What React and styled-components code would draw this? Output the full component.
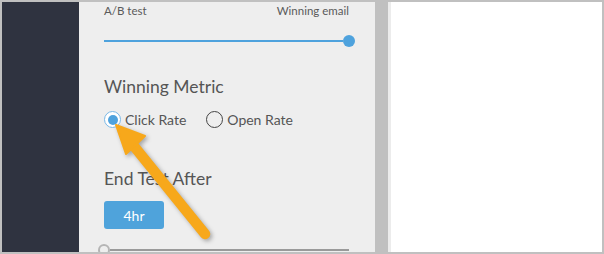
import React from "react";
import styled, { createGlobalStyle } from "styled-components";

const Global = createGlobalStyle`
  html, body { margin: 0; padding: 0; background: #fff; }
  body { font-family: Lato, "Open Sans", sans-serif; }
  * { box-sizing: border-box; }
`;

const Frame = styled.div`
  position: relative;
  width: 604px;
  height: 254px;
  border: 2px solid #c0c0c0;
  display: flex;
  overflow: hidden;
`;

const Sidebar = styled.div`
  width: 77px;
  background: #2f3340;
  flex-shrink: 0;
`;

const Panel = styled.div`
  width: 296px;
  flex-shrink: 0;
  background: #eeeeee;
  padding: 2px 20px 0 25px;
  display: flex;
  flex-direction: column;
  overflow: hidden;
  color: #555;
`;

const Gutter = styled.div`
  width: 13px;
  flex-shrink: 0;
  background: #c0c0c0;
`;

const Preview = styled.div`
  flex: 1;
  background: #fff;
  border-left: 3px solid #ececec;
`;

const LabelRow = styled.div`
  display: flex;
  justify-content: space-between;
  font-size: 11.5px;
  line-height: 14px;
  padding-right: 6px;
  color: #5a5a5a;
`;

const Slider = styled.div`
  display: flex;
  align-items: center;
  height: 12px;
  margin-top: ${(p) => p.$mt}px;
  margin-left: ${(p) => p.$ml || 0}px;
  margin-right: ${(p) => p.$mr || 0}px;
`;

const Track = styled.div`
  flex: 1;
  height: 2px;
  background: ${(p) => p.$color};
`;

const Thumb = styled.div`
  width: 12px;
  height: 12px;
  border-radius: 50%;
  flex-shrink: 0;
  background: ${(p) => (p.$outline ? "#eeeeee" : "#4ea2dd")};
  border: ${(p) => (p.$outline ? "2px solid #b5b5b5" : "none")};
`;

const Heading = styled.div`
  font-size: 17.5px;
  line-height: 20px;
  color: #555;
  margin-top: ${(p) => p.$mt}px;
`;

const RadioGroup = styled.div`
  display: flex;
  align-items: center;
  gap: 20px;
  margin-top: 14px;
  height: 18px;
`;

const RadioOption = styled.label`
  display: flex;
  align-items: center;
  gap: 4px;
  font-size: 14px;
  color: #555;
`;

const RadioCircle = styled.span`
  width: 17px;
  height: 17px;
  border-radius: 50%;
  display: flex;
  align-items: center;
  justify-content: center;
  border: 1.5px solid ${(p) => (p.$checked ? "#7ab8e6" : "#444")};
  background: ${(p) => (p.$checked ? "#fff" : "transparent")};
  &::after {
    content: "";
    width: 10px;
    height: 10px;
    border-radius: 50%;
    background: ${(p) => (p.$checked ? "#4ea2dd" : "transparent")};
  }
`;

const TimeButton = styled.button`
  margin-top: 12px;
  width: 60px;
  height: 28px;
  border: none;
  border-radius: 3px;
  background: #4fa3db;
  color: #fff;
  font-family: inherit;
  font-size: 14px;
  padding: 0;
`;

const ArrowLayer = styled.svg`
  position: absolute;
  left: -2px;
  top: -2px;
  width: 604px;
  height: 254px;
  pointer-events: none;
  filter: drop-shadow(2px 2px 2px rgba(0, 0, 0, 0.3));
`;

function Radio({ checked, label }) {
  return (
    <RadioOption>
      <RadioCircle $checked={checked} />
      {label}
    </RadioOption>
  );
}

export default function App() {
  return (
    <>
      <Global />
      <Frame>
        <Sidebar />
        <Panel>
          <LabelRow>
            <span>A/B test</span>
            <span>Winning email</span>
          </LabelRow>
          <Slider $mt={17}>
            <Track $color="#4ea2dd" />
            <Thumb />
          </Slider>
          <Heading $mt={30}>Winning Metric</Heading>
          <RadioGroup>
            <Radio checked label="Click Rate" />
            <Radio label="Open Rate" />
          </RadioGroup>
          <Heading $mt={41}>End Test After</Heading>
          <div>
            <TimeButton>4hr</TimeButton>
          </div>
          <Slider $mt={15} $ml={-6} $mr={6}>
            <Thumb $outline />
            <Track $color="#9a9a9a" />
          </Slider>
        </Panel>
        <Gutter />
        <Preview />
        <ArrowLayer viewBox="0 0 604 254">
          <line x1="133" y1="145" x2="205" y2="234" stroke="#f7a81b" strokeWidth="10.5" strokeLinecap="round" />
          <polygon points="116,125 145,136 126,154" fill="#f7a81b" stroke="#f7a81b" strokeWidth="2" strokeLinejoin="round" />
        </ArrowLayer>
      </Frame>
    </>
  );
}
